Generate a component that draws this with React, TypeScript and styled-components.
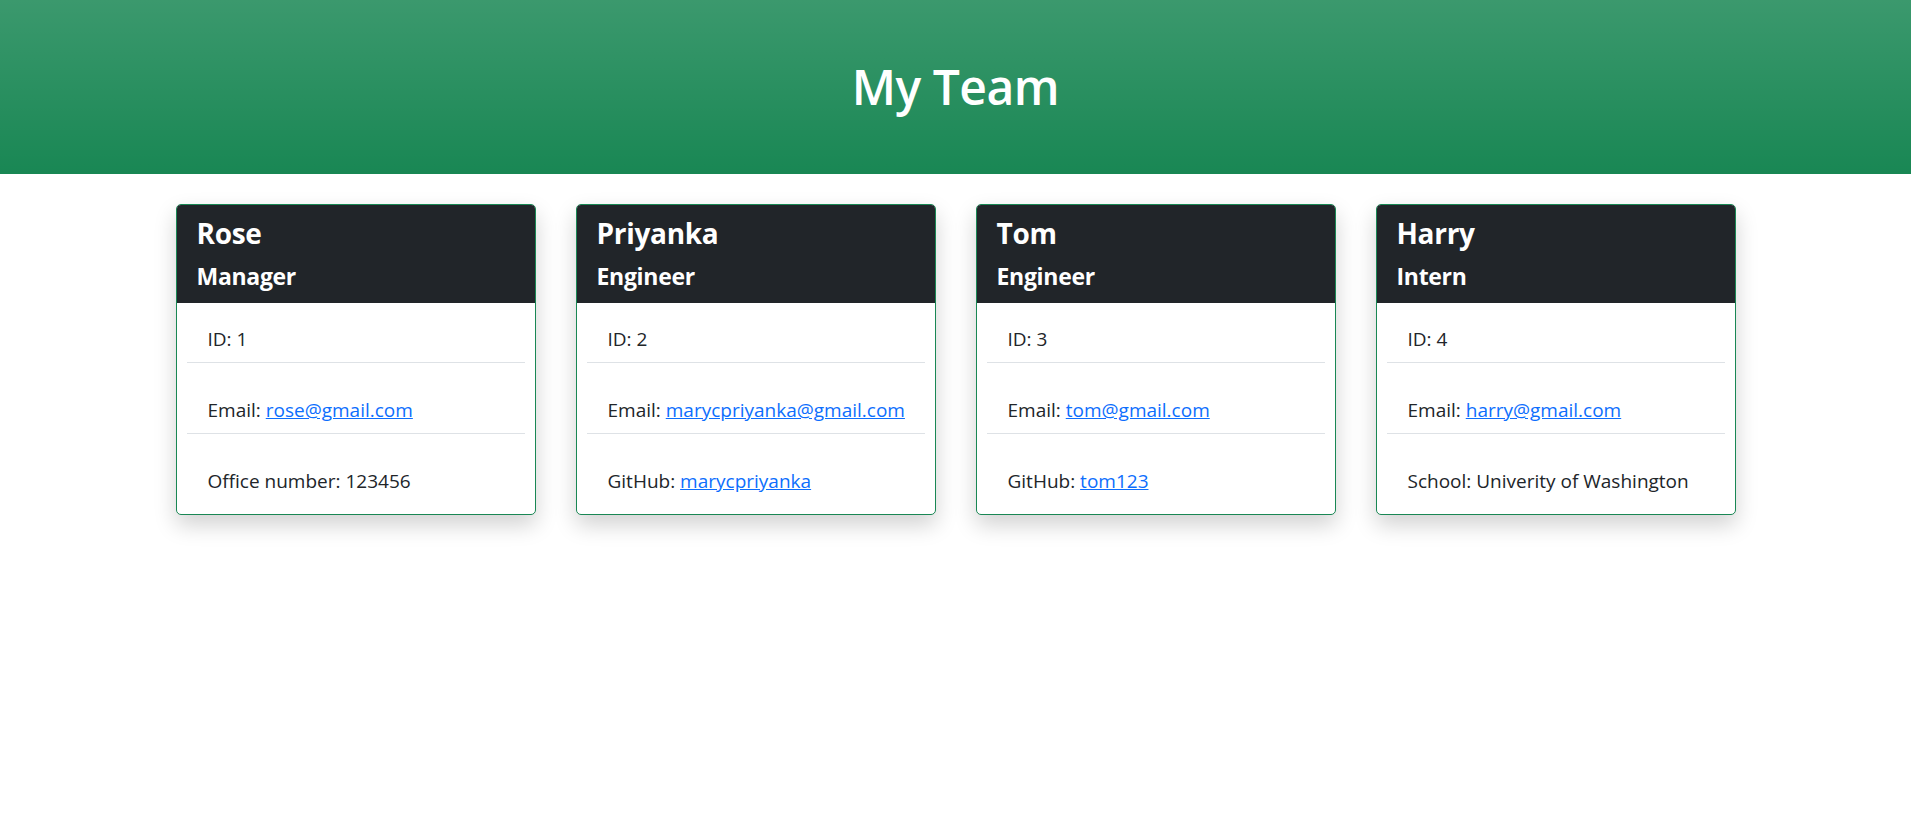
import React from "react";
import styled, { createGlobalStyle } from "styled-components";

const GlobalStyle = createGlobalStyle`
  html, body { margin: 0; padding: 0; background: #fff; }
  body {
    font-family: "Open Sans", "Noto Sans", "Liberation Sans", sans-serif;
    color: #212529;
    -webkit-font-smoothing: antialiased;
  }
  * { box-sizing: border-box; }
`;

const Banner = styled.header`
  background-color: #198754;
  background-image: linear-gradient(180deg, rgba(255,255,255,0.15), rgba(255,255,255,0));
  height: 174px;
  display: flex;
  align-items: center;
  justify-content: center;
`;

const Title = styled.h1`
  margin: 0;
  color: #fff;
  font-size: 48px;
  font-weight: 600;
  line-height: 1.2;
  letter-spacing: -0.5px;
`;

const Grid = styled.main`
  display: flex;
  align-items: flex-start;
  justify-content: center;
  gap: 40px;
  padding: 30px 0 80px;
`;

const Card = styled.section`
  width: 360px;
  border: 1px solid #198754;
  border-radius: 5px;
  background: #fff;
  box-shadow: 0 10px 22px rgba(0, 0, 0, 0.18);
  overflow: hidden;
`;

const CardHead = styled.div`
  background: #212529;
  color: #fff;
  height: 98px;
  padding: 8px 20px 0;
`;

const Name = styled.h2`
  margin: 0;
  font-size: 28px;
  font-weight: 700;
  line-height: 40px;
  letter-spacing: -0.3px;
`;

const Role = styled.h3`
  margin: 0;
  padding-top: 4px;
  font-size: 23px;
  font-weight: 700;
  line-height: 38px;
  letter-spacing: -0.3px;
`;

const Body = styled.ul`
  list-style: none;
  margin: 0;
  padding: 0 10px 10px;
`;

const Item = styled.li<{ $first?: boolean; $last?: boolean }>`
  padding: ${(p) => (p.$first ? "21px" : "32px")} 21px 8px;
  font-size: 19px;
  line-height: 30px;
  white-space: nowrap;
  border-bottom: ${(p) => (p.$last ? "none" : "1px solid #dee2e6")};
`;

const Link = styled.a`
  color: #0d6efd;
  text-decoration: underline;
`;

type Member = {
  name: string;
  role: string;
  id: number;
  email: string;
  extraLabel: string;
  extraValue: string;
  extraLink?: boolean;
};

const team: Member[] = [
  { name: "Rose", role: "Manager", id: 1, email: "rose@gmail.com", extraLabel: "Office number", extraValue: "123456" },
  { name: "Priyanka", role: "Engineer", id: 2, email: "marycpriyanka@gmail.com", extraLabel: "GitHub", extraValue: "marycpriyanka", extraLink: true },
  { name: "Tom", role: "Engineer", id: 3, email: "tom@gmail.com", extraLabel: "GitHub", extraValue: "tom123", extraLink: true },
  { name: "Harry", role: "Intern", id: 4, email: "harry@gmail.com", extraLabel: "School", extraValue: "Univerity of Washington" },
];

export default function App() {
  return (
    <>
      <GlobalStyle />
      <Banner>
        <Title>My Team</Title>
      </Banner>
      <Grid>
        {team.map((m) => (
          <Card key={m.id}>
            <CardHead>
              <Name>{m.name}</Name>
              <Role>{m.role}</Role>
            </CardHead>
            <Body>
              <Item $first>ID: {m.id}</Item>
              <Item>
                Email: <Link href={`mailto:${m.email}`}>{m.email}</Link>
              </Item>
              <Item $last>
                {m.extraLabel}:{" "}
                {m.extraLink ? <Link href="#">{m.extraValue}</Link> : m.extraValue}
              </Item>
            </Body>
          </Card>
        ))}
      </Grid>
    </>
  );
}
